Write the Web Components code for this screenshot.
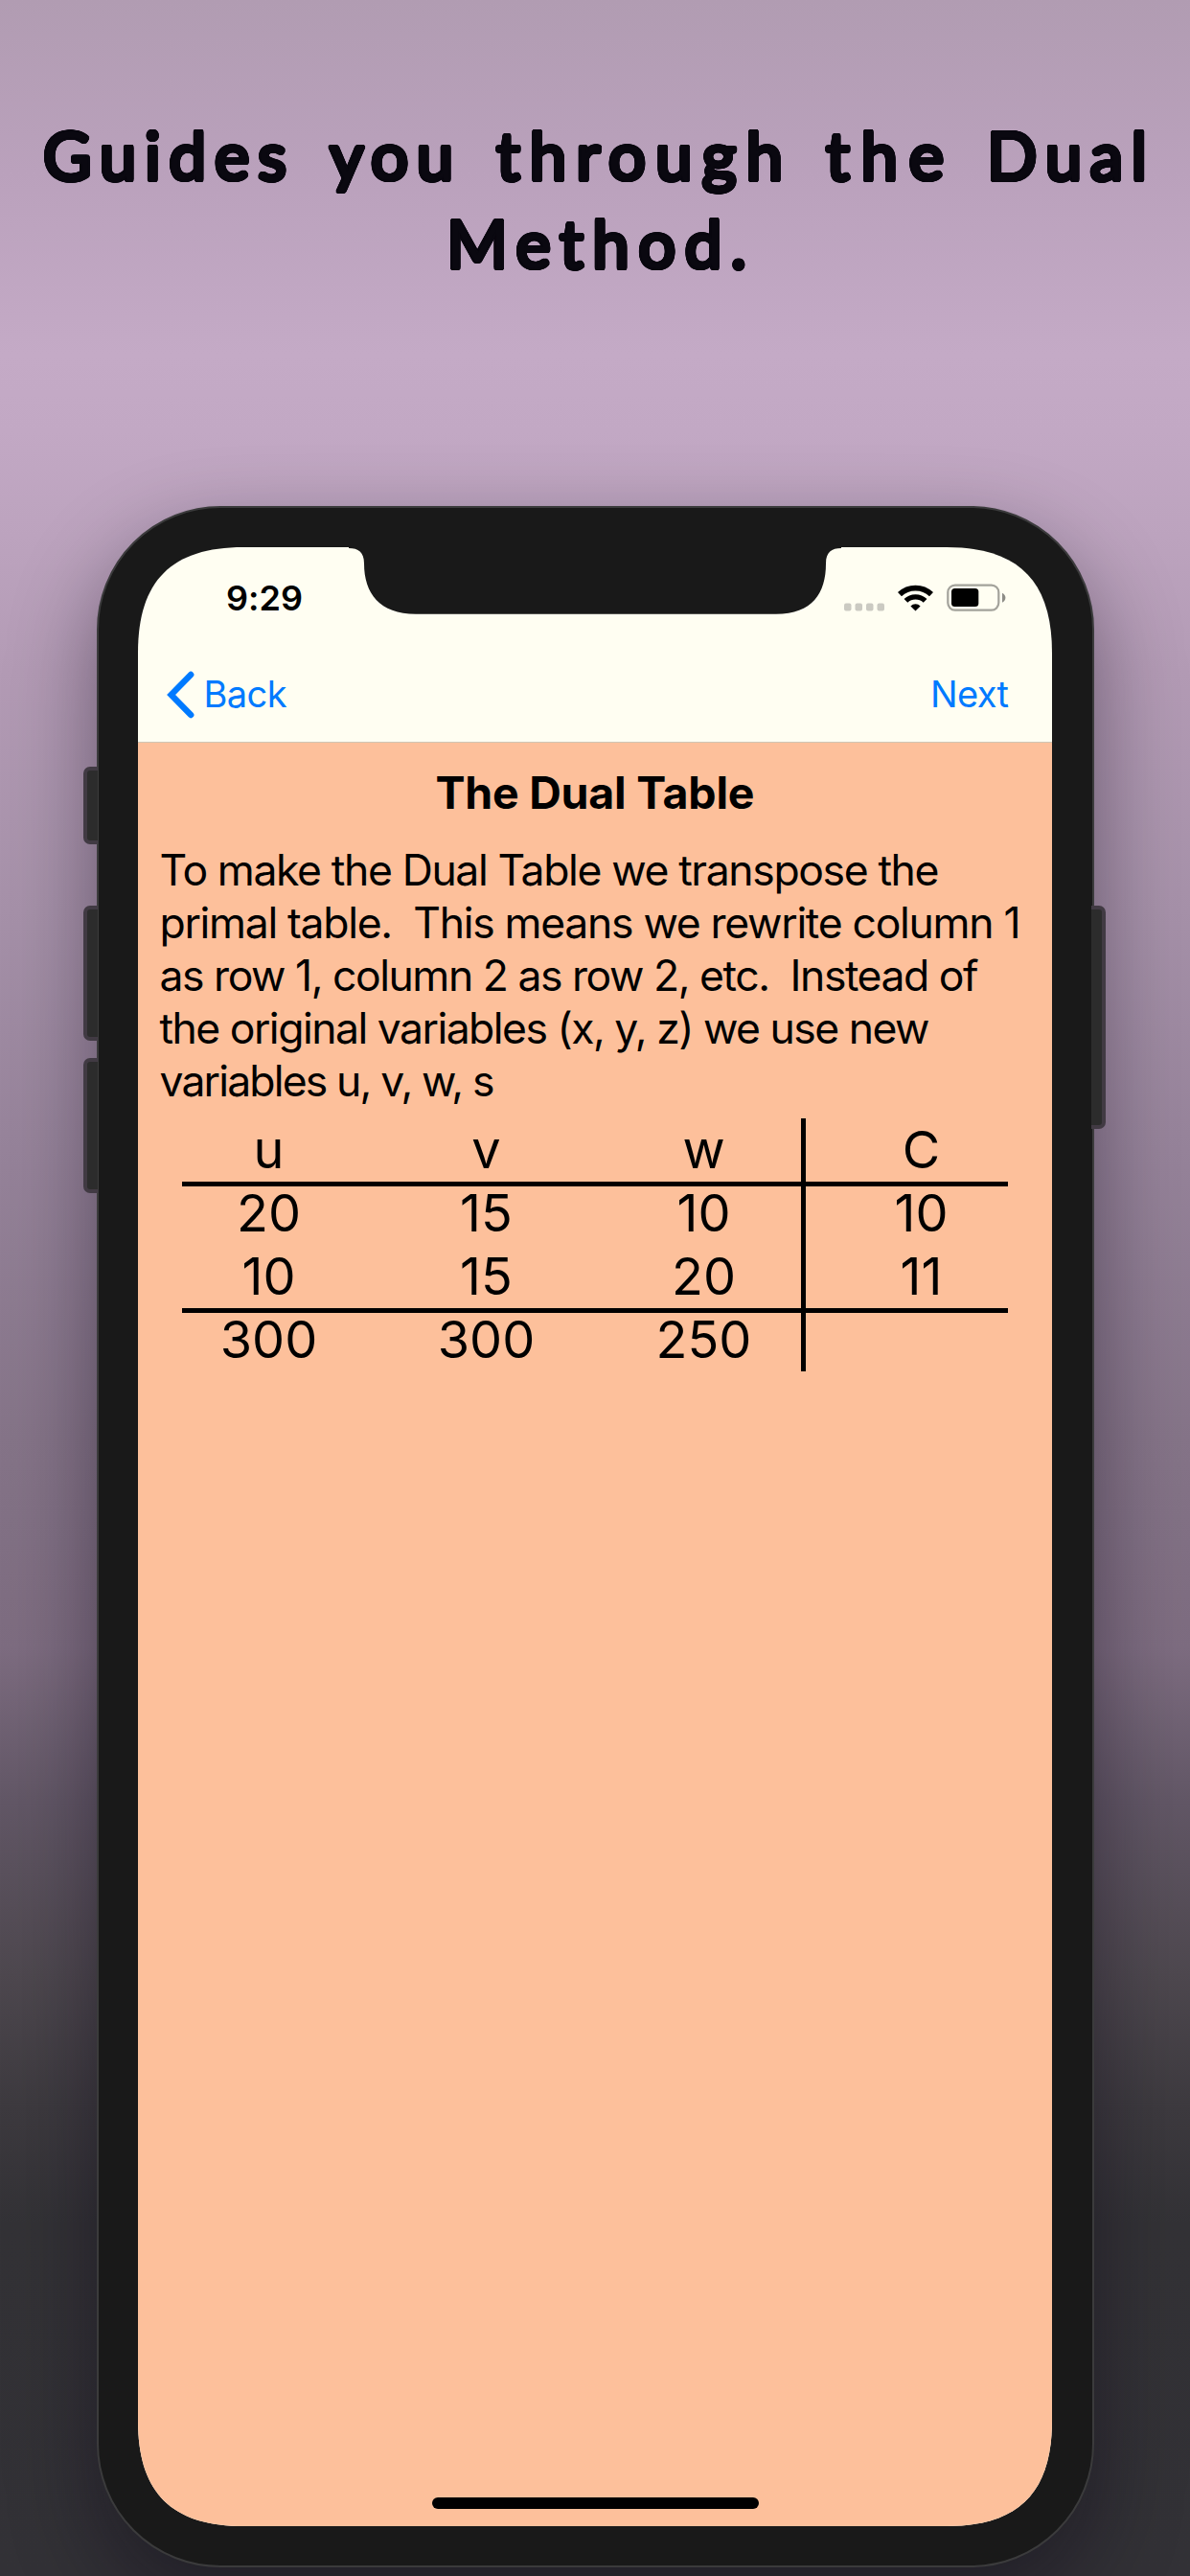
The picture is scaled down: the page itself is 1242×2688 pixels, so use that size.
<!DOCTYPE html>
<html lang="en">
<head>
<meta charset="utf-8">
<title>Dual Method</title>
<style>
html,body{margin:0;padding:0}
body{width:1242px;height:2688px;overflow:hidden;font-family:Inter,"Liberation Sans",sans-serif}
</style>
</head>
<body>
<promo-page></promo-page>
<script>
const define=(name,html,ready)=>customElements.define(name,class extends HTMLElement{
  constructor(){super();this.attachShadow({mode:'open'}).innerHTML=html;}
  connectedCallback(){if(ready)ready(this);}
});

/* One line of text, tracked so that it spans the width given in "w". */
define('fit-line',`<style>
:host{display:block;white-space:pre}
span{display:inline-block;white-space:pre}
</style><span></span>`,el=>{
  const s=el.shadowRoot.querySelector('span'),t=el.getAttribute('text');
  s.textContent=t;
  const w=+el.getAttribute('w');
  const ls=(w-s.getBoundingClientRect().width)/(t.length-1);
  s.style.letterSpacing=ls+'px';s.style.marginRight=-ls+'px';
});

/* Ring of shadows that thickens the strokes and rounds their ends. */
const ring=Array.from({length:24},(_,i)=>{
  const a=i*Math.PI/12;
  return `${(2.2*Math.cos(a)).toFixed(2)}px ${(2.2*Math.sin(a)).toFixed(2)}px 0 #0a0810`;
}).join(',');

define('promo-heading',`<style>
:host{display:flex;flex-direction:column;align-items:center;padding-top:116px;box-sizing:border-box;
 font:400 69px/92px Lato,"Open Sans",sans-serif;color:#0a0810;text-shadow:${ring}}
.row{display:flex;width:1152px;justify-content:space-between}
.row.b{width:310px}
</style>
<div class="row"><fit-line text="Guides" w="254"></fit-line><fit-line text="you" w="129"></fit-line><fit-line text="through" w="299"></fit-line><fit-line text="the" w="123"></fit-line><fit-line text="Dual" w="167"></fit-line></div>
<div class="row b"><fit-line text="Method." w="313"></fit-line></div>`);

define('status-bar',`<style>
:host{display:flex;justify-content:space-between;height:104px;box-sizing:border-box;padding:31px 48.5px 0 92px;color:#000}
.t{font:600 36px/44px Inter,sans-serif}
.i{display:flex;align-items:flex-end;gap:14px;height:36px}
svg{display:block}
</style>
<div class="t"><fit-line text="9:29" w="80"></fit-line></div>
<div class="i">
<svg width="42" height="9" viewBox="0 0 42 9" fill="#cbcac2"><rect x="0" y=".5" width="7.5" height="8" rx="2"/><rect x="11.5" y=".5" width="7.5" height="8" rx="2"/><rect x="23" y=".5" width="7.5" height="8" rx="2"/><rect x="34.5" y=".5" width="7.5" height="8" rx="2"/></svg>
<svg width="37" height="28" viewBox="0 0 37 28"><g fill="none" stroke="#000"><path d="M2 10.1A24 24 0 0 1 35 10.1" stroke-width="5.8"/><path d="M8.4 16.9A14.7 14.7 0 0 1 28.6 16.9" stroke-width="5.4"/></g><path d="M18.5 27.6L13.4 22.4A7.2 7.2 0 0 1 23.6 22.4Z"/></svg>
<svg width="62" height="29" viewBox="0 0 62 29"><rect x="1.3" y="1.6" width="53" height="26" rx="7.5" fill="none" stroke="#a3a29b" stroke-width="2.2"/><rect x="5" y="5" width="28.3" height="19" rx="3.5"/><path d="M58 9.7Q61.4 11.5 61.4 14.7T58 19.7Z" fill="#8d8c86"/></svg>
</div>`);

define('nav-bar',`<style>
:host{display:flex;justify-content:space-between;align-items:center;height:99px;box-sizing:content-box;border-bottom:1px solid #cfc6b4;padding:0 45px 0 29.5px;color:#007aff;font:400 38px/46px Inter,sans-serif}
.b{display:flex;align-items:center;gap:10px}
svg{display:block}
fit-line{margin-top:-1px}
</style>
<div class="b"><svg width="29" height="50" viewBox="0 0 29 50"><path d="M25.2 4L4.6 25L25.2 46" fill="none" stroke="#007aff" stroke-width="6.4" stroke-linecap="round" stroke-linejoin="miter"/></svg><fit-line text="Back" w="87"></fit-line></div>
<fit-line text="Next" w="82"></fit-line>`);

define('dual-table',`<style>
:host{display:grid;grid-template-columns:repeat(4,227px);grid-auto-rows:66px;margin:11px 0 0 23px;position:relative;
 text-align:center;font:400 54px/66px Inter,sans-serif}
i{position:absolute;background:#000}
.h{left:23px;width:862px;height:5px}
.v{left:669px;top:0;width:4.5px;height:264px}
</style>
<i class="h" style="top:66px"></i><i class="h" style="top:198px"></i><i class="v"></i>`,el=>{
  for(const c of ['u','v','w','C','20','15','10','10','10','15','20','11','300','300','250','']){
    const d=document.createElement('div');d.textContent=c;el.shadowRoot.append(d);
  }
});

define('lesson-body',`<style>
:host{display:block;flex:1;background:#fdc09b;padding-top:24px;color:#000}
.t{display:flex;justify-content:center;font:700 46.5px/56px Inter,sans-serif}
.p{padding-left:22.5px;margin-top:25.5px;font:400 44.5px/55px Inter,sans-serif}
</style>
<div class="t"><fit-line text="The Dual Table" w="333"></fit-line></div>
<div class="p">
<fit-line text="To make the Dual Table we transpose the" w="814"></fit-line>
<fit-line text="primal table.  This means we rewrite column 1" w="899"></fit-line>
<fit-line text="as row 1, column 2 as row 2, etc.  Instead of" w="855"></fit-line>
<fit-line text="the original variables (x, y, z) we use new" w="804"></fit-line>
<fit-line text="variables u, v, w, s" w="350"></fit-line>
</div>
<dual-table></dual-table>`);

define('phone-frame',`<style>
:host{display:block;box-sizing:border-box;width:1041px;height:2151px;margin:0 auto;position:relative}
.body{box-sizing:border-box;height:100%;border:2px solid #3b3b3c;border-radius:129px;background:#191919;padding:41px;position:relative;
 box-shadow:0 36px 90px rgba(10,5,20,.42)}
.screen{position:relative;display:flex;flex-direction:column;width:954px;height:2065px;background:#fffef2;margin:0 auto;
 clip-path:path("M0 110C0 35 35 0 110 0H844C919 0 954 35 954 110V1955C954 2030 919 2065 844 2065H110C35 2065 0 2030 0 1955Z")}
svg{position:absolute;left:0;top:0}
.home{position:absolute;left:307px;top:2035px;width:341px;height:11.5px;border-radius:6px;background:#000}
b{position:absolute;box-sizing:border-box;background:#2c2c2c;border:4px solid #413a43;}
.l{left:-13.5px;width:15px;border-right:0;border-radius:7px 0 0 7px}
.r{right:-12.5px;width:15px;border-left:0;border-radius:0 7px 7px 0}
</style>
<div class="body"><div class="screen"><slot></slot>
<svg width="954" height="80" viewBox="0 0 954 80"><path d="M220 -1V1C230 1 236 5 236 17C236 48 252 69.7 290 69.7H666C704 69.7 718 48 718 17C718 5 724 1 734 1V-1Z" fill="#191919"/></svg>
<div class="home"></div></div></div>
<b class="l" style="top:272px;height:81px"></b><b class="l" style="top:417px;height:141px"></b><b class="l" style="top:576px;height:141px"></b><b class="r" style="top:417px;height:233px"></b>`);

define('promo-page',`<style>
:host{display:flex;flex-direction:column;width:1242px;height:2688px;overflow:hidden;
background:linear-gradient(#b19cb2 0,#baa1bc 180px,#c4aac6 370px,#c2a8c4 450px,#bca3be 560px,#b39bb5 700px,#a691a9 950px,#96839a 1200px,#857488 1500px,#7d6c80 1720px,#625766 1880px,#4e484f 2060px,#3d3a3f 2200px,#333236 2320px,#323136)}
promo-heading{height:528px}
</style>
<promo-heading></promo-heading>
<phone-frame><status-bar></status-bar><nav-bar></nav-bar><lesson-body></lesson-body></phone-frame>`);
</script>
</body>
</html>
